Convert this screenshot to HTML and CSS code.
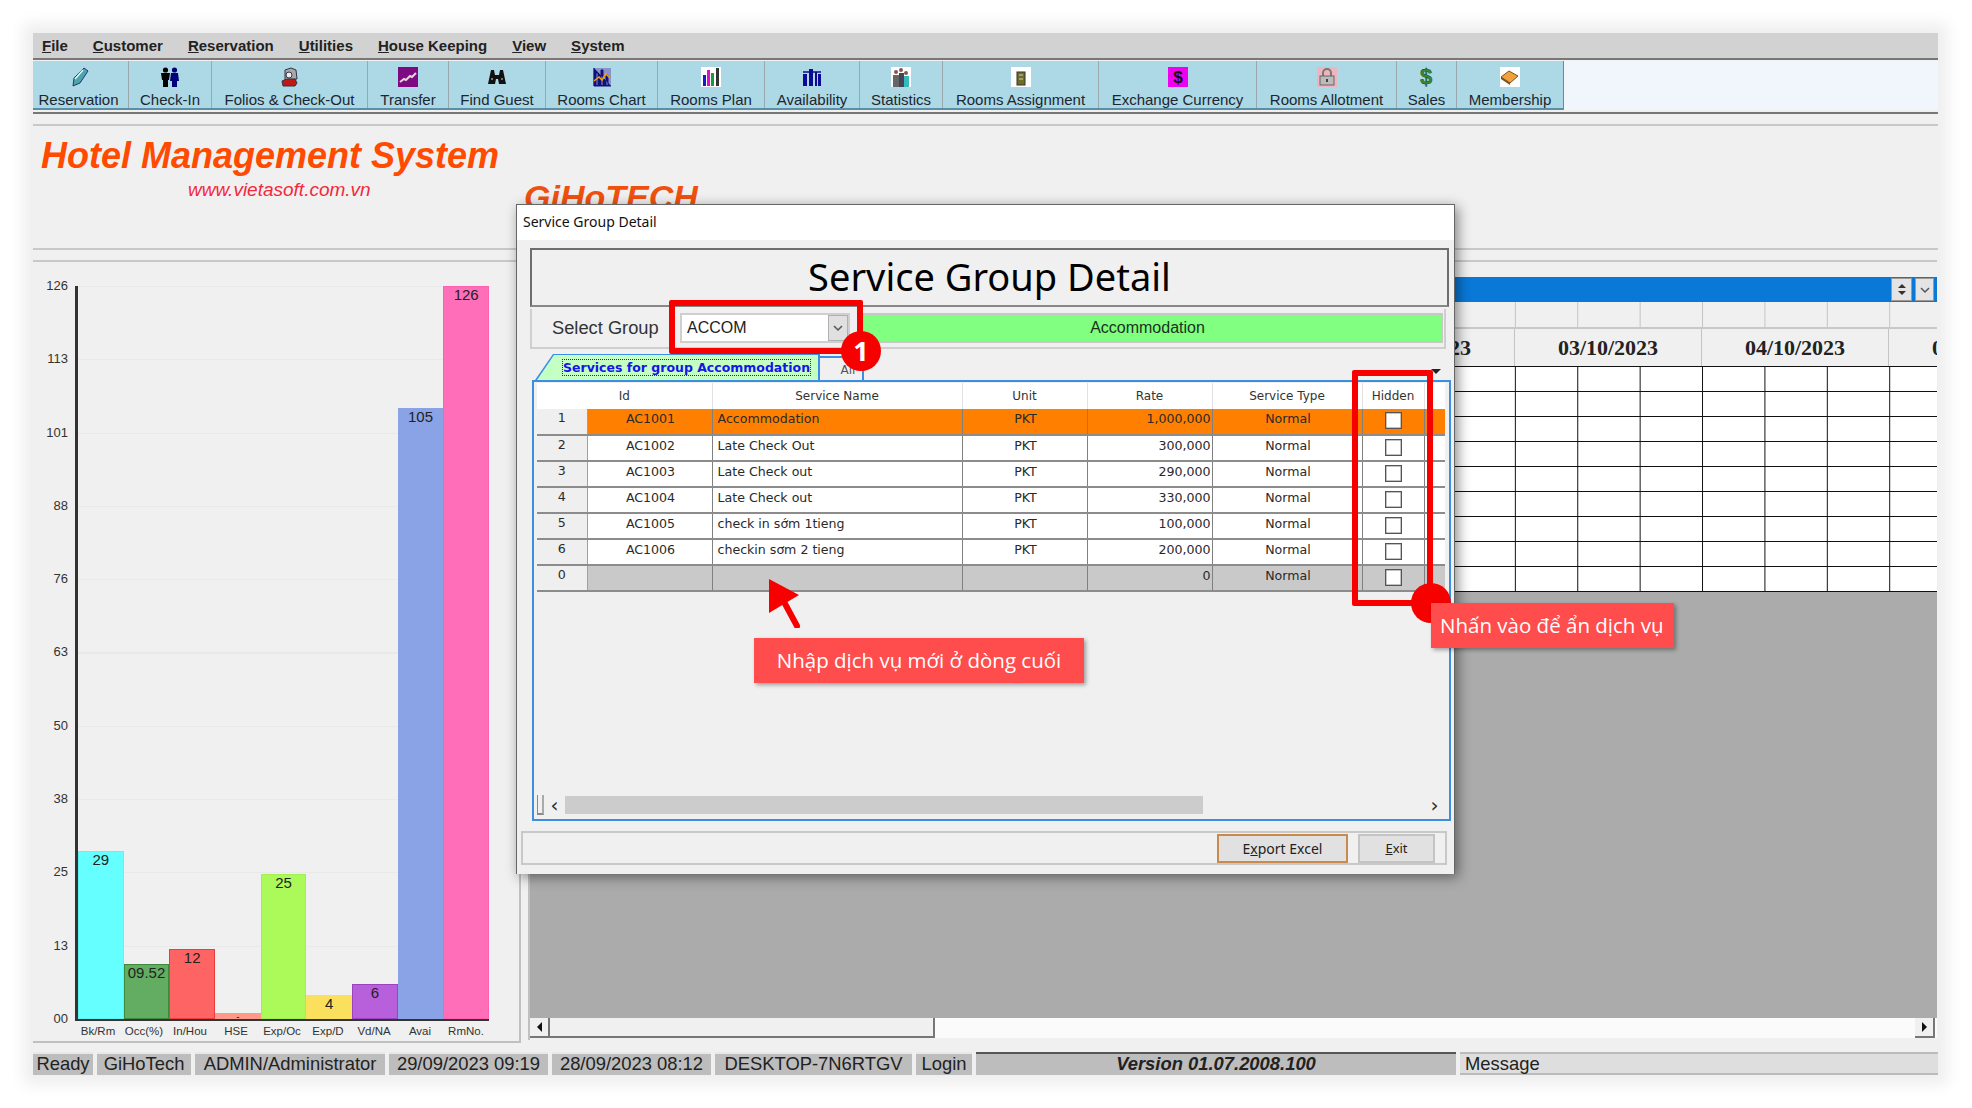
FILE: index.html
```html
<!DOCTYPE html>
<html lang="en">
<head>
    <meta charset="UTF-8">
    <meta name="viewport" content="width=device-width, initial-scale=1.0">
    <title>Service Group Detail</title>
    <link rel="stylesheet" href="styles.css">
</head>
<body>
<div class="app">
  <div class="menu-bar">
    <span><u>F</u>ile</span>
    <span><u>C</u>ustomer</span>
    <span><u>R</u>eservation</span>
    <span><u>U</u>tilities</span>
    <span><u>H</u>ouse Keeping</span>
    <span><u>V</u>iew</span>
    <span><u>S</u>ystem</span>
  </div>

  <div class="toolbar-wrap">
    <div class="toolbar">
      <div class="tool">
        <svg class="icon" viewBox="0 0 20 20"><path d="M15 1l4 3-8 12-7 3 1-8z" fill="#4fa3ad" stroke="#1f3a70"/><path d="M6 12l8-9" stroke="#dff" stroke-width="1.5"/></svg>
        <span>Reservation</span>
      </div>
      <div class="tool">
        <svg class="icon" viewBox="0 0 20 20"><circle cx="5.5" cy="3" r="2.6"/><path d="M1 6h9l-1 7H8v7H3v-7H2z"/><circle cx="14.500" cy="3" r="2.600" fill="#00007a"/><path d="M11 6h7l1 8h-2v6h-5v-6h-2z" fill="#00007a"/></svg>
        <span>Check-In</span>
      </div>
      <div class="tool">
        <svg class="icon" viewBox="0 0 20 20"><path d="M5 3l6-2 5 2 1 9-12 1z" fill="#a8a8a8" stroke="#334"/><circle cx="9" cy="8" r="3" fill="#eee" stroke="#334"/><path d="M2 14l5-2h8l2 4-2 3H3z" fill="#c01818" stroke="#334"/></svg>
        <span>Folios &amp; Check-Out</span>
      </div>
      <div class="tool">
        <svg class="icon" viewBox="0 0 20 20"><rect width="20" height="20" fill="#7d0a82"/><path d="M2 15l4-3 2 1 4-4 2 1 4-4" fill="none" stroke="#e6d6d6" stroke-width="2"/></svg>
        <span>Transfer</span>
      </div>
      <div class="tool">
        <svg class="icon" viewBox="0 0 20 20"><path d="M4 3h3l1 5h4l1-5h3l3 14h-7l-1-5H9l-1 5H1z" fill="#111"/><path d="M4 12h2M14 12h2" stroke="#ddd"/></svg>
        <span>Find Guest</span>
      </div>
      <div class="tool">
        <svg class="icon" viewBox="0 0 20 20"><rect x="1" y="1" width="18" height="18" fill="#8a93c8"/><path d="M2 1v18h17M4 18V6h2v12M9 18V3h2v15M14 18V8h2v10" fill="#11117a" stroke="#11117a"/><path d="M2 14l5-4 3 3 4-6 4 4" fill="none" stroke="#f5a000" stroke-width="1.500"/></svg>
        <span>Rooms Chart</span>
      </div>
      <div class="tool">
        <svg class="icon" viewBox="0 0 20 20"><rect width="20" height="20" fill="#fff"/><rect x="2" y="8" width="3" height="11" fill="#1a1acc"/><rect x="6" y="3" width="3" height="16" fill="#e010c0"/><rect x="10" y="6" width="3" height="13" fill="#1a9a40"/><rect x="15" y="1" width="3" height="18" fill="#333"/></svg>
        <span>Rooms Plan</span>
      </div>
      <div class="tool">
        <svg class="icon" viewBox="0 0 20 20"><path d="M1 19V7h4v12zM7 19V2h4v17zM13 19V5h2v14zM16 19V7h3v12z" fill="#0b0b95"/><path d="M1 5h18" stroke="#0b0b95" stroke-width="1.500"/></svg>
        <span>Availability</span>
      </div>
      <div class="tool">
        <svg class="icon" viewBox="0 0 20 20"><rect width="20" height="20" fill="#fff"/><circle cx="5" cy="5" r="2" fill="#855"/><path d="M2 8h6v12H2z" fill="#666"/><circle cx="10" cy="3" r="2" fill="#855"/><path d="M8 6h5v14H8z" fill="#445"/><circle cx="15" cy="6" r="2" fill="#855"/><path d="M13 9h5v11h-5z" fill="#3bb"/></svg>
        <span>Statistics</span>
      </div>
      <div class="tool">
        <svg class="icon" viewBox="0 0 20 20"><rect width="20" height="20" fill="#fff"/><rect x="6" y="5" width="8" height="13" fill="#6e6e22" stroke="#333"/><path d="M8 8h4M8 12h4" stroke="#ccc"/></svg>
        <span>Rooms Assignment</span>
      </div>
      <div class="tool">
        <svg class="icon" viewBox="0 0 20 20"><rect width="20" height="20" fill="#f000f0"/><text class="dollar" x="10" y="16">$</text></svg>
        <span>Exchange Currency</span>
      </div>
      <div class="tool">
        <svg class="icon" viewBox="0 0 20 20"><rect width="20" height="20" fill="#f0b4c0"/><path d="M6 9V6a4 4 0 0 1 8 0v3" fill="none" stroke="#777" stroke-width="2"/><rect x="3" y="9" width="14" height="9" fill="#bbb" stroke="#666"/><rect x="9" y="12" width="2" height="3" fill="#444"/></svg>
        <span>Rooms Allotment</span>
      </div>
      <div class="tool">
        <svg class="icon" viewBox="0 0 20 20"><text class="dollar green" x="9" y="17">$</text></svg>
        <span>Sales</span>
      </div>
      <div class="tool">
        <svg class="icon" viewBox="0 0 20 20"><rect width="20" height="20" fill="#fff"/><path d="M1 10l8-6 9 5-8 7z" fill="#f2a23a" stroke="#7a5020"/><path d="M1 10l9 6v2l-9-6z" fill="#7a5020"/></svg>
        <span>Membership</span>
      </div>
    </div>
    <div class="toolbar-rest"></div>
  </div>

  <div class="logo-row">
    <div class="logo-left">
      <h1 class="logo">Hotel Management System</h1>
      <div class="logo-url">www.vietasoft.com.vn</div>
    </div>
    <div class="logo-right">GiHoTECH</div>
  </div>

  <div class="main">
    <div class="chart-panel">
      <div class="y-axis">
        <span>126</span><span>113</span><span>101</span><span>88</span><span>76</span><span>63</span>
        <span>50</span><span>38</span><span>25</span><span>13</span><span>00</span>
      </div>
      <div class="plot-col">
        <div class="plot">
          <div class="bar c-cyan" style="height:168px">29</div>
          <div class="bar c-green" style="height:55px">09.52</div>
          <div class="bar c-red" style="height:70px">12</div>
          <div class="bar c-salmon" style="height:6px">1</div>
          <div class="bar c-lime" style="height:145px">25</div>
          <div class="bar c-yellow" style="height:24px">4</div>
          <div class="bar c-purple" style="height:35px">6</div>
          <div class="bar c-blue" style="height:611px">105</div>
          <div class="bar c-pink" style="height:733px">126</div>
        </div>
        <div class="x-axis">
          <span>Bk/Rm</span><span>Occ(%)</span><span>In/Hou</span><span>HSE</span><span>Exp/Oc</span>
          <span>Exp/D</span><span>Vd/NA</span><span>Avai</span><span>RmNo.</span>
        </div>
      </div>
    </div>

    <div class="mdi">
      <div class="mdi-body">
        <div class="child">
          <div class="child-strip"></div>
          <div class="child-blue">
            <div class="spin"><i class="up"></i><i class="down"></i></div>
            <div class="spin-combo"><svg width="12" height="8" viewBox="0 0 12 8"><path d="M2 2l4 4 4-4" fill="none" stroke="#555" stroke-width="1.500"/></svg></div>
          </div>
          <div class="head-cols"></div>
          <div class="head-dates">
            <div class="date-cell">02/10/2023</div>
            <div class="date-cell">03/10/2023</div>
            <div class="date-cell">04/10/2023</div>
            <div class="date-cell">05/10/2023</div>
          </div>
          <div class="cells"></div>
        </div>
      </div>
      <div class="mdi-scroll">
        <div class="sb-btn"><i class="tri-left"></i></div>
        <div class="sb-thumb"></div>
        <div class="sb-track"></div>
        <div class="sb-btn"><i class="tri-right"></i></div>
      </div>
    </div>
  </div>

  <div class="status-bar">
    <div class="st st-ready">Ready</div>
    <div class="st st-co">GiHoTech</div>
    <div class="st st-user">ADMIN/Administrator</div>
    <div class="st st-date">29/09/2023 09:19</div>
    <div class="st st-date">28/09/2023 08:12</div>
    <div class="st st-host">DESKTOP-7N6RTGV</div>
    <div class="st st-login">Login</div>
    <div class="st st-version">Version 01.07.2008.100</div>
    <div class="st st-msg">Message</div>
  </div>
</div>

<div class="dialog">
  <div class="dialog-title">Service Group Detail</div>
  <div class="dialog-body">
    <div class="dlg-heading">Service Group Detail</div>
    <div class="select-row">
      <span class="select-label">Select Group</span>
      <div class="combo">
        <span>ACCOM</span>
        <div class="combo-btn"><svg width="12" height="8" viewBox="0 0 12 8"><path d="M2 2l4 4 4-4" fill="none" stroke="#555" stroke-width="1.500"/></svg></div>
      </div>
      <div class="group-name">Accommodation</div>
    </div>

    <div class="tabs">
      <div class="tab-active"><div class="tab-fill"><span class="tab-focus">Services for group Accommodation</span></div></div>
      <div class="tab-other"><span>All</span></div>
      <div class="tab-more"></div>
    </div>

    <div class="tab-panel">
      <table class="grid">
        <colgroup>
          <col class="w-head"><col class="w-id"><col class="w-name"><col class="w-unit"><col class="w-rate"><col class="w-type"><col class="w-hidden"><col>
        </colgroup>
        <thead>
          <tr><th></th><th>Id</th><th>Service Name</th><th>Unit</th><th>Rate</th><th>Service Type</th><th>Hidden</th><th></th></tr>
        </thead>
        <tbody>
          <tr class="row-sel"><td class="rh">1</td><td class="ctr">AC1001</td><td>Accommodation</td><td class="ctr">PKT</td><td class="num">1,000,000</td><td class="ctr">Normal</td><td class="ck"><i class="check"></i></td><td></td></tr>
          <tr><td class="rh">2</td><td class="ctr">AC1002</td><td>Late Check Out</td><td class="ctr">PKT</td><td class="num">300,000</td><td class="ctr">Normal</td><td class="ck"><i class="check"></i></td><td></td></tr>
          <tr><td class="rh">3</td><td class="ctr">AC1003</td><td>Late Check out</td><td class="ctr">PKT</td><td class="num">290,000</td><td class="ctr">Normal</td><td class="ck"><i class="check"></i></td><td></td></tr>
          <tr><td class="rh">4</td><td class="ctr">AC1004</td><td>Late Check out</td><td class="ctr">PKT</td><td class="num">330,000</td><td class="ctr">Normal</td><td class="ck"><i class="check"></i></td><td></td></tr>
          <tr><td class="rh">5</td><td class="ctr">AC1005</td><td>check in sớm 1tieng</td><td class="ctr">PKT</td><td class="num">100,000</td><td class="ctr">Normal</td><td class="ck"><i class="check"></i></td><td></td></tr>
          <tr><td class="rh">6</td><td class="ctr">AC1006</td><td>checkin sơm 2 tieng</td><td class="ctr">PKT</td><td class="num">200,000</td><td class="ctr">Normal</td><td class="ck"><i class="check"></i></td><td></td></tr>
          <tr class="row-new"><td class="rh">0</td><td></td><td></td><td></td><td class="num">0</td><td class="ctr">Normal</td><td class="ck"><i class="check"></i></td><td></td></tr>
        </tbody>
      </table>
      <div class="grid-scroll">
        <div class="gs-corner"></div>
        <span class="gs-arrow">‹</span>
        <div class="gs-thumb"></div>
        <span class="gs-arrow gs-right">›</span>
      </div>
    </div>

    <div class="dlg-footer">
      <div class="btn btn-focus">E<u>x</u>port Excel</div>
      <div class="btn btn-exit"><u>E</u>xit</div>
    </div>
  </div>
</div>

<!-- annotations on top of the screenshot -->
<div class="mark mark-combo"></div>
<div class="mark-dot dot-one">1</div>
<div class="mark mark-hidden"></div>
<div class="mark-dot dot-two"></div>
<svg class="arrow" viewBox="0 0 34 50"><path d="M1 1L31 17 1 35z" fill="#f60000"/><path d="M15 22l14 26" stroke="#f60000" stroke-width="6" stroke-linecap="round"/></svg>
<div class="callout callout-new">Nhập dịch vụ mới ở dòng cuối</div>
<div class="callout callout-hide">Nhấn vào để ẩn dịch vụ</div>
</body>
</html>
```

FILE: styles.css
```css
body {
    margin: 0;
    padding: 33px 34px 0 33px;
    position: relative;
    height: 1075px;
    overflow: hidden;
    background-color: #ffffff;
    font-family: "Liberation Sans", Arial, sans-serif;
    color: #111;
}
.app {
    display: flex;
    flex-direction: column;
    width: 1905px;
    height: 1042px;
    background-color: #f0f0f0;
    box-shadow: 0 0 14px 10px #efefef;
}

/* menu + toolbar */
.menu-bar {
    display: flex;
    align-items: center;
    gap: 25px;
    height: 25px;
    padding-left: 9px;
    background-color: #d2d2d2;
    border-bottom: 2px solid #777;
    font-size: 15px;
    font-weight: bold;
    color: #222;
}
.toolbar-wrap {
    display: flex;
    height: 49px;
    margin-top: 1px;
}
.toolbar {
    display: grid;
    grid-template-columns: 96px 83px 156px 81px 97px 112px 107px 95px 83px 156px 158px 140px 60px 106px;
    background-color: #add8e6;
    border-bottom: 2px solid #5c8ea6;
    border-right: 1px solid #5c8ea6;
}
.toolbar-rest {
    flex: 1;
    background-color: #f1f6fc;
}
.tool {
    display: flex;
    flex-direction: column;
    align-items: center;
    padding-top: 6px;
    border-right: 1px solid #9aa8ae;
    font-size: 15px;
    line-height: 17px;
    color: #1c2630;
    white-space: nowrap;
}
.tool:first-child {
    padding-right: 4px;
}
.tool:last-child {
    border-right: none;
}
.icon {
    width: 20px;
    height: 20px;
    margin-bottom: 4px;
}
.dollar {
    font-family: "Liberation Sans", sans-serif;
    font-size: 17px;
    font-weight: bold;
    text-anchor: middle;
    fill: #111;
}
.green {
    font-size: 22px;
    fill: #2f8f2f;
    stroke: #123;
    stroke-width: 0.4px;
}

/* logo */
.logo-row {
    display: flex;
    height: 136px;
    margin-top: 2px;
    border-top: 2px solid #777;
    box-sizing: border-box;
    position: relative;
}
.logo-row::before {
    content: "";
    position: absolute;
    left: 0;
    right: 0;
    top: 10px;
    height: 2px;
    background-color: #c8c8c8;
}
.logo-left {
    width: 491px;
    padding: 22px 0 0 8px;
    box-sizing: border-box;
}
.logo {
    margin: 0;
    font-size: 36px;
    line-height: 40px;
    font-style: italic;
    color: #ff4a00;
    white-space: nowrap;
}
.logo-url {
    margin-top: 3px;
    padding-left: 147px;
    font-size: 19px;
    line-height: 22px;
    font-style: italic;
    color: #f4283c;
}
.logo-right {
    margin-top: 64px;
    font-size: 34px;
    font-weight: bold;
    font-style: italic;
    color: #f0500f;
    white-space: nowrap;
}

/* chart + mdi */
.main {
    display: flex;
    height: 783px;
    border-top: 2px solid #c8c8c8;
    padding-top: 10px;
    background-color: #f0f0f0;
}
.chart-panel {
    display: flex;
    width: 488px;
    box-sizing: border-box;
    border-top: 2px solid #c8c8c8;
    border-bottom: 2px solid #c0c0c0;
    border-right: 2px solid #c0c0c0;
    background-color: #f0f0f0;
}
.y-axis {
    display: flex;
    flex-direction: column;
    justify-content: space-between;
    align-items: flex-end;
    width: 35px;
    height: 749px;
    margin-top: 16px;
    font-size: 13px;
    line-height: 16px;
    color: #333;
}
.plot-col {
    margin-left: 7px;
    width: 414px;
    padding-top: 24px;
}
.plot {
    display: flex;
    align-items: flex-end;
    height: 733px;
    border-left: 3px solid #333;
    border-bottom: 2px solid #333;
    background-image: repeating-linear-gradient(to bottom, #e9e9e9 0, #e9e9e9 1px, transparent 1px, transparent 73.3px);
}
.bar {
    flex: 1;
    overflow: hidden;
    box-sizing: border-box;
    border: 1px solid transparent;
    font-size: 15px;
    line-height: 15px;
    text-align: center;
    color: #222;
}
.c-cyan { background-color: #66ffff; border-color: #5cf5f5; }
.c-green { background-color: #62ad62; border-color: #3d8a3d; }
.c-red { background-color: #ff6464; border-color: #ee3c3c; }
.c-salmon { background-color: #ff9a8a; }
.c-lime { background-color: #acf95a; border-color: #a2ef50; }
.c-yellow { background-color: #fbe05e; }
.c-purple { background-color: #b85fdc; border-color: #9a44c0; }
.c-blue { background-color: #8aa2e6; }
.c-pink { background-color: #ff6eb8; border-color: #ff60b0; }
.x-axis {
    display: flex;
    font-size: 11.500px;
    line-height: 20px;
    color: #333;
}
.x-axis span {
    flex: 1;
    text-align: center;
    white-space: nowrap;
}
.mdi {
    display: flex;
    flex-direction: column;
    width: 1407px;
    height: 778px;
    margin-left: 7px;
    border-left: 2px solid #c0c0c0;
    border-top: 2px solid #c8c8c8;
}
.mdi-body {
    height: 756px;
    background-color: #ababab;
    overflow: hidden;
    flex-shrink: 0;
}
.child {
    background-color: #f0f0f0;
    height: 330px;
    overflow: hidden;
}
.child-strip {
    height: 15px;
}
.child-blue {
    display: flex;
    justify-content: flex-end;
    align-items: center;
    gap: 3px;
    height: 25px;
    padding-right: 3px;
    background-color: #0a78d7;
}
.spin {
    display: flex;
    flex-direction: column;
    justify-content: center;
    align-items: center;
    gap: 3px;
    width: 19px;
    height: 21px;
    background-color: #e4e4e4;
    border: 1px solid #999;
}
.spin i {
    border-left: 4px solid transparent;
    border-right: 4px solid transparent;
}
.spin .up { border-bottom: 4px solid #333; }
.spin .down { border-top: 4px solid #333; }
.spin-combo {
    display: flex;
    align-items: center;
    justify-content: center;
    width: 17px;
    height: 21px;
    background-color: #e4e4e4;
    border: 1px solid #999;
}
.head-cols {
    height: 27px;
    box-sizing: border-box;
    border-bottom: 2px solid #c8c8c8;
    background-image: linear-gradient(to right, #c4c4c4 1px, transparent 1px);
    background-size: 62.400px 100%;
    background-position: 49px 0;
}
.head-dates {
    display: flex;
    height: 38px;
    box-sizing: border-box;
    padding-left: 798px;
    border-bottom: 1px solid #111;
}
.date-cell {
    flex: 0 0 187px;
    box-sizing: border-box;
    border-right: 1px solid #c4c4c4;
    font-family: "Liberation Serif", "Times New Roman", serif;
    font-size: 22px;
    font-weight: bold;
    line-height: 38px;
    text-align: center;
    color: #222;
}
.cells {
    height: 225px;
    background-color: #ffffff;
    background-image: linear-gradient(to right, #111 1px, transparent 1px), linear-gradient(to bottom, transparent 24px, #111 24px, #111 25px);
    background-size: 62.400px 100%, 100% 25px;
    background-position: 49px 0, 0 0;
}
.mdi-scroll {
    display: flex;
    height: 20px;
    background-color: #fbfbfb;
    padding-right: 2px;
}
.sb-btn {
    display: flex;
    align-items: center;
    justify-content: center;
    width: 20px;
    box-sizing: border-box;
    background-color: #f0f0f0;
    border-right: 2px solid #777;
    border-bottom: 2px solid #777;
}
.sb-thumb {
    width: 385px;
    box-sizing: border-box;
    background-color: #f0f0f0;
    border-right: 2px solid #777;
    border-bottom: 2px solid #777;
}
.sb-track {
    flex: 1;
}
.tri-left, .tri-right {
    border-top: 5px solid transparent;
    border-bottom: 5px solid transparent;
}
.tri-left { border-right: 5px solid #111; }
.tri-right { border-left: 5px solid #111; }

/* status bar */
.status-bar {
    display: flex;
    gap: 4px;
    height: 23px;
    margin-top: 9px;
    font-size: 18.400px;
    color: #222;
    white-space: nowrap;
}
.st {
    flex: none;
    box-sizing: border-box;
    background-color: #bdbdbd;
    border-top: 2px solid #e8e8e8;
    line-height: 20px;
    text-align: center;
}
.st-ready { width: 60px; }
.st-co { width: 94px; }
.st-user { width: 190px; }
.st-date { width: 159px; }
.st-host { width: 197px; }
.st-login { width: 56px; }
.st-version {
    width: 480px;
    border-top-color: #555;
    font-weight: bold;
    font-style: italic;
}
.st-msg {
    flex: 1;
    padding-left: 5px;
    background-color: #dedede;
    border-top-color: #bbb;
    border-bottom: 2px solid #bbb;
    text-align: left;
}

/* dialog */
.dialog {
    position: absolute;
    left: 516px;
    top: 204px;
    display: flex;
    flex-direction: column;
    width: 939px;
    height: 670px;
    box-sizing: border-box;
    border: 1px solid #666;
    border-bottom: none;
    background-color: #f0f0f0;
    box-shadow: 3px 3px 12px rgba(0, 0, 0, 0.45);
}
.dialog-title {
    height: 35px;
    padding-left: 6px;
    background-color: #ffffff;
    font-family: "Noto Sans", sans-serif;
    font-size: 14px;
    line-height: 33px;
    color: #111;
}
.dialog-body {
    flex: 1;
    padding: 8px 5px 0 13px;
    font-family: "DejaVu Sans", sans-serif;
}
.dlg-heading {
    height: 59px;
    box-sizing: border-box;
    border: 2px solid #6e6e6e;
    border-bottom-color: #888;
    font-family: "Noto Sans", sans-serif;
    font-size: 38px;
    line-height: 52px;
    text-align: center;
    color: #000;
}
.select-row {
    display: flex;
    align-items: center;
    height: 40px;
    width: 916px;
    margin-top: 2px;
    box-sizing: border-box;
    padding: 0 1px 0 20px;
    border: 2px solid #cfcfcf;
    border-top: none;
    font-family: "Liberation Sans", sans-serif;
}
.select-label {
    width: 128px;
    font-size: 18.300px;
    color: #333;
}
.combo {
    display: flex;
    align-items: center;
    justify-content: space-between;
    width: 170px;
    height: 30px;
    box-sizing: border-box;
    padding-left: 5px;
    background-color: #ffffff;
    border: 2px solid #cfcfcf;
    font-size: 16px;
    color: #222;
}
.combo-btn {
    display: flex;
    align-items: center;
    justify-content: center;
    width: 20px;
    height: 26px;
    background-color: #e0e0e0;
    border: 1px solid #b0b0b0;
    box-sizing: border-box;
}
.group-name {
    flex: 1;
    height: 30px;
    margin-left: 10px;
    padding-right: 8px;
    background-color: #80ff80;
    border: 2px solid #c8c8c8;
    box-sizing: border-box;
    font-size: 16px;
    line-height: 26px;
    text-align: center;
    color: #1a331a;
}
.tabs {
    display: flex;
    align-items: flex-end;
    height: 26px;
    margin-top: 5px;
    margin-left: 5px;
}
.tab-active {
    width: 285px;
    height: 26px;
    background-color: #3a8fe0;
    clip-path: polygon(18px 0, 100% 0, 100% 100%, 0 100%);
}
.tab-fill {
    height: 25px;
    margin: 1px 2px 0 2px;
    padding-left: 26px;
    background-color: #c4ffc4;
    clip-path: polygon(17px 0, 100% 0, 100% 100%, 0 100%);
    font-size: 12.500px;
    font-weight: bold;
    line-height: 26px;
    color: #1515e8;
    white-space: nowrap;
}
.tab-focus {
    outline: 1px dotted #333;
}
.tab-other {
    width: 44px;
    height: 24px;
    box-sizing: border-box;
    padding-left: 14px;
    border-top: 2px solid #3a8fe0;
    border-right: 2px solid #3a8fe0;
    font-size: 12px;
    line-height: 24px;
    text-align: center;
    color: #555;
}
.tab-more {
    margin-left: auto;
    margin-right: 8px;
    margin-bottom: 6px;
    border-top: 5px solid #222;
    border-left: 5px solid transparent;
    border-right: 5px solid transparent;
}
.tab-panel {
    display: flex;
    flex-direction: column;
    height: 441px;
    margin-left: 2px;
    margin-right: -2px;
    box-sizing: border-box;
    padding: 1px 3px 0 3px;
    border: 2px solid #3a8fe0;
}
.grid {
    width: 908px;
    table-layout: fixed;
    border-collapse: collapse;
    font-size: 12.600px;
    line-height: 14px;
    color: #2a2a2a;
}
.w-head { width: 50px; }
.w-id { width: 125px; }
.w-name { width: 250px; }
.w-unit { width: 125px; }
.w-rate { width: 125px; }
.w-type { width: 150px; }
.w-hidden { width: 62px; }
.grid th {
    height: 26px;
    padding: 0;
    background-color: #ffffff;
    border-right: 1px solid #e2e2e2;
    font-size: 12px;
    font-weight: normal;
    color: #333;
}
.grid th:first-child {
    border-right: none;
}
.grid th:nth-child(2) {
    padding-right: 50px;
}
.grid th:last-child, .grid td:last-child {
    border-right: none;
}
.grid td {
    height: 26px;
    box-sizing: border-box;
    padding: 0 0 5px 5px;
    background-color: #ffffff;
    border-right: 1px solid #808080;
    border-bottom: 2px solid #8c8c8c;
    white-space: nowrap;
    overflow: hidden;
}
.grid td.rh {
    padding: 0 0 7px 0;
    background-color: #efefef;
    border-right: 1px solid #a0a0a0;
    text-align: center;
}
.grid td.ctr {
    padding-left: 2px;
    text-align: center;
}
.grid td.num {
    padding: 0 1px 5px 0;
    text-align: right;
}
.grid td.ck {
    padding: 0;
    vertical-align: top;
}
.row-sel td {
    background-color: #ff8000;
}
.grid .row-sel td.rh, .grid .row-new td.rh {
    background-color: #efefef;
}
.row-new td {
    background-color: #c9c9c9;
}
.check {
    display: block;
    width: 15px;
    height: 15px;
    margin: 3px auto 0;
    background-color: #ffffff;
    border: 1px solid #555;
    box-shadow: inset 0 0 0 0.5px #888;
}
.grid-scroll {
    display: flex;
    align-items: center;
    height: 20px;
    margin-top: auto;
    margin-bottom: 4px;
    font-size: 20px;
    color: #333;
}
.gs-corner {
    width: 7px;
    height: 20px;
    border-left: 1px solid #888;
    border-right: 2px solid #aaa;
    border-bottom: 2px solid #888;
    box-sizing: border-box;
}
.gs-arrow {
    width: 21px;
    text-align: center;
    line-height: 18px;
}
.gs-thumb {
    width: 638px;
    height: 18px;
    background-color: #cccccc;
}
.gs-right {
    margin-left: auto;
    margin-right: 1px;
}
.dlg-footer {
    display: flex;
    justify-content: flex-end;
    align-items: center;
    gap: 10px;
    width: 926px;
    height: 34px;
    margin-top: 10px;
    margin-left: -9px;
    box-sizing: border-box;
    padding-right: 10px;
    border: 2px solid #c8c8c8;
}
.btn {
    display: flex;
    align-items: center;
    justify-content: center;
    height: 29px;
    box-sizing: border-box;
    background-color: #e1e1e1;
    border: 2px solid #c4c4c4;
    font-family: "Noto Sans", sans-serif;
    font-size: 14px;
    color: #222;
}
.btn-focus {
    width: 131px;
    border-color: #c98a4b;
}
.btn-exit {
    width: 77px;
    font-size: 13px;
}

/* annotations */
.mark {
    position: absolute;
    box-sizing: border-box;
    border: 6px solid #f60000;
    border-radius: 2px;
}
.mark-combo {
    left: 669px;
    top: 300px;
    width: 194px;
    height: 54px;
}
.mark-hidden {
    left: 1352px;
    top: 370px;
    width: 81px;
    height: 236px;
}
.mark-dot {
    position: absolute;
    width: 40px;
    height: 40px;
    border-radius: 50%;
    background-color: #f60000;
    font-family: "Open Sans", sans-serif;
    font-size: 27px;
    font-weight: bold;
    line-height: 40px;
    text-align: center;
    color: #ffffff;
}
.dot-one {
    left: 841px;
    top: 331px;
}
.dot-two {
    left: 1411px;
    top: 583px;
}
.arrow {
    position: absolute;
    left: 768px;
    top: 578px;
    width: 34px;
    height: 50px;
}
.callout {
    position: absolute;
    box-sizing: border-box;
    height: 45px;
    background-color: #ff4c4c;
    box-shadow: 2px 2px 4px rgba(0, 0, 0, 0.35);
    font-family: "Open Sans", sans-serif;
    font-size: 20.500px;
    line-height: 45px;
    color: #ffffff;
    white-space: nowrap;
}
.callout-new {
    left: 754px;
    top: 638px;
    width: 330px;
    text-align: center;
}
.callout-hide {
    left: 1431px;
    top: 603px;
    width: 243px;
    padding-left: 9px;
}
```
